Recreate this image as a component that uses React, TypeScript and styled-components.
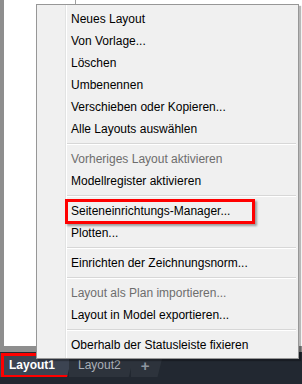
import React from "react";
import styled, { createGlobalStyle } from "styled-components";

interface MenuEntry {
  label?: string;
  disabled?: boolean;
  marked?: boolean;
  separator?: boolean;
}

const entries: MenuEntry[] = [
  { label: "Neues Layout" },
  { label: "Von Vorlage..." },
  { label: "Löschen" },
  { label: "Umbenennen" },
  { label: "Verschieben oder Kopieren..." },
  { label: "Alle Layouts auswählen" },
  { separator: true },
  { label: "Vorheriges Layout aktivieren", disabled: true },
  { label: "Modellregister aktivieren" },
  { separator: true },
  { label: "Seiteneinrichtungs-Manager...", marked: true },
  { label: "Plotten..." },
  { separator: true },
  { label: "Einrichten der Zeichnungsnorm..." },
  { separator: true },
  { label: "Layout als Plan importieren...", disabled: true },
  { label: "Layout in Model exportieren..." },
  { separator: true },
  { label: "Oberhalb der Statusleiste fixieren" },
];

const GlobalStyle = createGlobalStyle`
  html, body {
    margin: 0;
    padding: 0;
    background: #ffffff;
  }
  body {
    font-family: "Liberation Sans", Tahoma, sans-serif;
  }
`;

const Screen = styled.div`
  position: relative;
  width: 302px;
  height: 384px;
  overflow: hidden;
  display: flex;
  flex-direction: column;
`;

const Workspace = styled.div`
  flex: 1;
  background: #ffffff;
  border-left: 4px solid #8e8e8e;
  border-bottom: 6px solid #8e8e8e;
  position: relative;
`;

const TickLine = styled.div`
  margin-left: 71px;
  width: 1px;
  height: 4px;
  background: #a0a0a0;
`;

const TabBar = styled.div`
  height: 31px;
  background: #222831;
  display: flex;
  align-items: flex-start;
  padding-top: 1px;
`;

const Tab = styled.div<{ active?: boolean }>`
  position: relative;
  height: 24px;
  display: flex;
  align-items: center;
  padding: 0 ${(p) => (p.active ? "18px" : "14px")} 0 9px;
  margin-right: -4px;
  font-size: 12px;
  font-weight: ${(p) => (p.active ? "bold" : "normal")};
  color: ${(p) => (p.active ? "#ffffff" : "#aab0b8")};
  background: ${(p) => (p.active ? "#3c4452" : "#2d333c")};
  clip-path: polygon(0 0, 100% 0, calc(100% - 6px) 100%, 0 100%);
`;

const PlusTab = styled(Tab)`
  padding: 0 14px 0 10px;
  font-size: 15px;
  font-weight: bold;
  color: #8f96a0;
`;

const Marker = styled.span<{ inset?: string }>`
  position: absolute;
  inset: ${(p) => p.inset};
  border: 3px solid #ff0000;
  box-shadow: 2px 2px 2px rgba(0, 0, 0, 0.35);
  pointer-events: none;
`;

const Menu = styled.div`
  position: absolute;
  left: 36px;
  top: 4px;
  width: 261px;
  padding: 3px 0 2px;
  background: #f0f0f0;
  border: 1px solid #979797;
  box-shadow: 2px 2px 1px rgba(0, 0, 0, 0.28);
  z-index: 2;
  &::before {
    content: "";
    position: absolute;
    left: 28px;
    top: 0;
    bottom: 0;
    width: 1px;
    background: #e2e3e3;
    border-right: 1px solid #ffffff;
  }
`;

const Item = styled.div<{ disabled?: boolean }>`
  position: relative;
  height: 22px;
  line-height: 22px;
  padding-left: 34px;
  font-size: 12px;
  white-space: nowrap;
  color: ${(p) => (p.disabled ? "#6d6d6d" : "#000000")};
`;

const Separator = styled.div`
  height: 8px;
  display: flex;
  align-items: center;
  padding-left: 30px;
  padding-right: 2px;
  &::after {
    content: "";
    flex: 1;
    height: 1px;
    background: #d7d7d7;
    border-bottom: 1px solid #ffffff;
  }
`;

const App = () => {
  return (
    <Screen>
      <GlobalStyle />
      <Workspace>
        <TickLine />
      </Workspace>
      <TabBar>
        <Tab active>
          Layout1
          <Marker inset="0 0 -1px 1px" />
        </Tab>
        <Tab>Layout2</Tab>
        <PlusTab>+</PlusTab>
      </TabBar>
      <Menu>
        {entries.map((e, i) =>
          e.separator ? (
            <Separator key={i} />
          ) : (
            <Item key={i} disabled={e.disabled}>
              {e.label}
              {e.marked && <Marker inset="-1px 43px -2px 28px" />}
            </Item>
          )
        )}
      </Menu>
    </Screen>
  );
};

export default App;
